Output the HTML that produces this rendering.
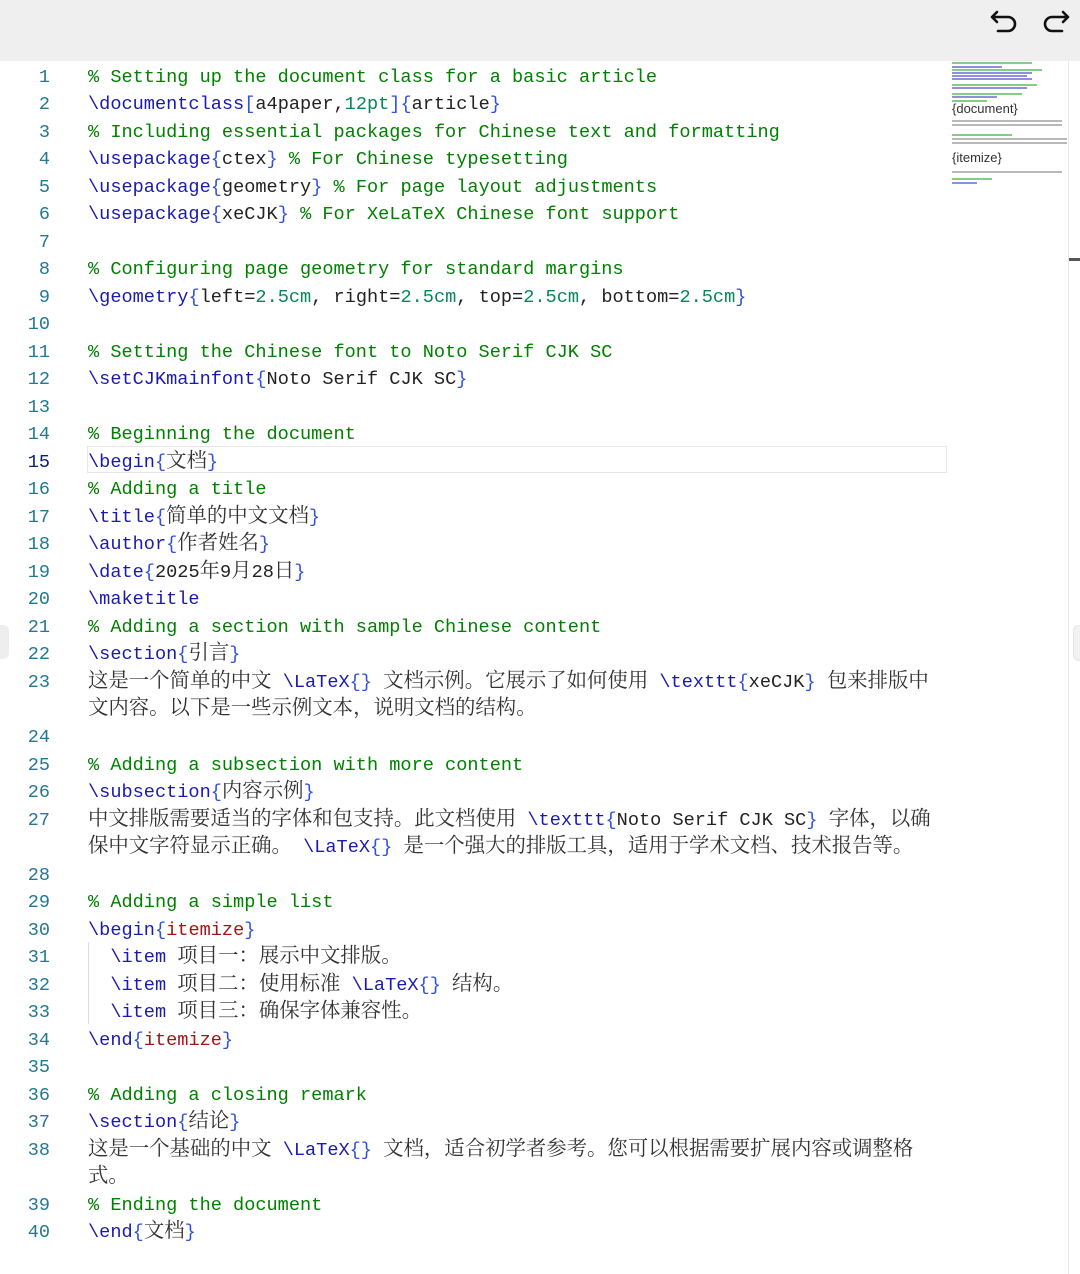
<!DOCTYPE html>
<html><head><meta charset="utf-8"><style>
body{margin:0;width:1080px;height:1274px;background:#fff;overflow:hidden;position:relative;font-family:"Liberation Mono","Noto Serif CJK SC",monospace;}
.top{position:absolute;left:0;top:0;width:1080px;height:61px;background:#efefef;}
.ln{position:absolute;left:0;width:50px;text-align:right;font-size:18.5px;color:#237893;line-height:27.52px;height:27.52px;}
.cd{position:absolute;left:88px;white-space:pre;font-size:18.6px;line-height:27.52px;height:27.52px;color:#222;}
.c{color:#008000}.k{color:#1a1ab0}.b{color:#3050e0}.n{color:#098658}.r{color:#a31515}
.z{font-family:"Noto Serif CJK SC",serif;font-size:20.4px;color:#333;line-height:10px}
.hl{position:absolute;left:87px;top:446px;width:858px;height:25px;border:1px solid #e6e6e6;}
.mm{position:absolute;left:952px;height:2px;background:#9bb;opacity:.6}
</style></head><body>
<div class="top"></div>
<svg style="position:absolute;left:988px;top:8px" width="34" height="30" viewBox="0 0 34 30"><path d="M9 4 L4 9 L9 14 M4 9 H20 a7 7 0 0 1 0 14 H10" fill="none" stroke="#111" stroke-width="2.6" stroke-linecap="round" stroke-linejoin="round"/></svg>
<svg style="position:absolute;left:1038px;top:8px" width="34" height="30" viewBox="0 0 34 30"><path d="M25 4 L30 9 L25 14 M30 9 H14 a7 7 0 0 0 0 14 H24" fill="none" stroke="#111" stroke-width="2.6" stroke-linecap="round" stroke-linejoin="round"/></svg>
<div class="hl"></div>
<div style="position:absolute;left:1068px;top:61px;width:1px;height:1213px;background:#e8e8e8"></div>
<div style="position:absolute;left:1069px;top:258px;width:11px;height:3px;background:#555"></div>
<div style="position:absolute;left:0;top:625px;width:9px;height:34px;background:#eee;border-radius:0 6px 6px 0"></div>
<div style="position:absolute;left:1073px;top:625px;width:7px;height:34px;background:#f2f2f2;border-radius:6px 0 0 6px;border:1px solid #e4e4e4"></div>
<div class="mm" style="top:62px;width:80px;background:#3a3"></div>
<div class="mm" style="top:66px;width:50px;background:#44c"></div>
<div class="mm" style="top:69px;width:90px;background:#3a3"></div>
<div class="mm" style="top:72px;width:80px;background:#44c"></div>
<div class="mm" style="top:75px;width:75px;background:#44c"></div>
<div class="mm" style="top:78px;width:80px;background:#44c"></div>
<div class="mm" style="top:84px;width:85px;background:#3a3"></div>
<div class="mm" style="top:87px;width:75px;background:#44c"></div>
<div class="mm" style="top:93px;width:70px;background:#3a3"></div>
<div class="mm" style="top:96px;width:45px;background:#44c"></div>
<div class="mm" style="top:100px;width:35px;background:#3a3"></div>
<div style="position:absolute;left:952px;top:101px;font-family:'Liberation Sans',sans-serif;font-size:13px;color:#333">{document}</div>
<div class="mm" style="top:120px;width:110px;background:#888"></div>
<div class="mm" style="top:124px;width:110px;background:#888"></div>
<div class="mm" style="top:134px;width:60px;background:#3a3"></div>
<div class="mm" style="top:138px;width:115px;background:#888"></div>
<div class="mm" style="top:142px;width:115px;background:#888"></div>
<div style="position:absolute;left:952px;top:150px;font-family:'Liberation Sans',sans-serif;font-size:13px;color:#333">{itemize}</div>
<div class="mm" style="top:171px;width:110px;background:#888"></div>
<div class="mm" style="top:178px;width:40px;background:#3a3"></div>
<div class="mm" style="top:182px;width:25px;background:#44c"></div>
<div style="position:absolute;left:88px;top:942px;width:1px;height:82px;background:#ddd"></div>
<div id="ed"></div>
<script>
var L=[
[1,'<span class=c>% Setting up the document class for a basic article</span>'],
[2,'<span class=k>\\documentclass</span><span class=b>[</span>a4paper,<span class=n>12pt</span><span class=b>]{</span>article<span class=b>}</span>'],
[3,'<span class=c>% Including essential packages for Chinese text and formatting</span>'],
[4,'<span class=k>\\usepackage</span><span class=b>{</span>ctex<span class=b>}</span> <span class=c>% For Chinese typesetting</span>'],
[5,'<span class=k>\\usepackage</span><span class=b>{</span>geometry<span class=b>}</span> <span class=c>% For page layout adjustments</span>'],
[6,'<span class=k>\\usepackage</span><span class=b>{</span>xeCJK<span class=b>}</span> <span class=c>% For XeLaTeX Chinese font support</span>'],
[7,''],
[8,'<span class=c>% Configuring page geometry for standard margins</span>'],
[9,'<span class=k>\\geometry</span><span class=b>{</span>left=<span class=n>2.5cm</span>, right=<span class=n>2.5cm</span>, top=<span class=n>2.5cm</span>, bottom=<span class=n>2.5cm</span><span class=b>}</span>'],
[10,''],
[11,'<span class=c>% Setting the Chinese font to Noto Serif CJK SC</span>'],
[12,'<span class=k>\\setCJKmainfont</span><span class=b>{</span>Noto Serif CJK SC<span class=b>}</span>'],
[13,''],
[14,'<span class=c>% Beginning the document</span>'],
[15,'<span class=k>\\begin</span><span class=b>{</span><span class="z r">文档</span><span class=b>}</span>'],
[16,'<span class=c>% Adding a title</span>'],
[17,'<span class=k>\\title</span><span class=b>{</span><span class=z>简单的中文文档</span><span class=b>}</span>'],
[18,'<span class=k>\\author</span><span class=b>{</span><span class=z>作者姓名</span><span class=b>}</span>'],
[19,'<span class=k>\\date</span><span class=b>{</span>2025<span class=z>年</span>9<span class=z>月</span>28<span class=z>日</span><span class=b>}</span>'],
[20,'<span class=k>\\maketitle</span>'],
[21,'<span class=c>% Adding a section with sample Chinese content</span>'],
[22,'<span class=k>\\section</span><span class=b>{</span><span class=z>引言</span><span class=b>}</span>'],
[23,'<span class=z>这是一个简单的中文</span> <span class=k>\\LaTeX</span><span class=b>{}</span> <span class=z>文档示例。它展示了如何使用</span> <span class=k>\\texttt</span><span class=b>{</span>xeCJK<span class=b>}</span> <span class=z>包来排版中</span>'],
[0,'<span class=z>文内容。以下是一些示例文本，说明文档的结构。</span>'],
[24,''],
[25,'<span class=c>% Adding a subsection with more content</span>'],
[26,'<span class=k>\\subsection</span><span class=b>{</span><span class=z>内容示例</span><span class=b>}</span>'],
[27,'<span class=z>中文排版需要适当的字体和包支持。此文档使用</span> <span class=k>\\texttt</span><span class=b>{</span>Noto Serif CJK SC<span class=b>}</span> <span class=z>字体，以确</span>'],
[0,'<span class=z>保中文字符显示正确。</span> <span class=k>\\LaTeX</span><span class=b>{}</span> <span class=z>是一个强大的排版工具，适用于学术文档、技术报告等。</span>'],
[28,''],
[29,'<span class=c>% Adding a simple list</span>'],
[30,'<span class=k>\\begin</span><span class=b>{</span><span class=r>itemize</span><span class=b>}</span>'],
[31,'  <span class=k>\\item</span> <span class=z>项目一：展示中文排版。</span>'],
[32,'  <span class=k>\\item</span> <span class=z>项目二：使用标准</span> <span class=k>\\LaTeX</span><span class=b>{}</span> <span class=z>结构。</span>'],
[33,'  <span class=k>\\item</span> <span class=z>项目三：确保字体兼容性。</span>'],
[34,'<span class=k>\\end</span><span class=b>{</span><span class=r>itemize</span><span class=b>}</span>'],
[35,''],
[36,'<span class=c>% Adding a closing remark</span>'],
[37,'<span class=k>\\section</span><span class=b>{</span><span class=z>结论</span><span class=b>}</span>'],
[38,'<span class=z>这是一个基础的中文</span> <span class=k>\\LaTeX</span><span class=b>{}</span> <span class=z>文档，适合初学者参考。您可以根据需要扩展内容或调整格</span>'],
[0,'<span class=z>式。</span>'],
[39,'<span class=c>% Ending the document</span>'],
[40,'<span class=k>\\end</span><span class=b>{</span><span class="z r">文档</span><span class=b>}</span>']
];
var h='';
for(var i=0;i<L.length;i++){var t=(63.5+27.52*i).toFixed(2);
if(L[i][0])h+='<div class=ln style="top:'+t+'px;'+(L[i][0]==15?'color:#0b216f':'')+'">'+L[i][0]+'</div>';
h+='<div class=cd style="top:'+t+'px">'+L[i][1]+'</div>';}
document.getElementById('ed').innerHTML=h;
</script>
</body></html>
